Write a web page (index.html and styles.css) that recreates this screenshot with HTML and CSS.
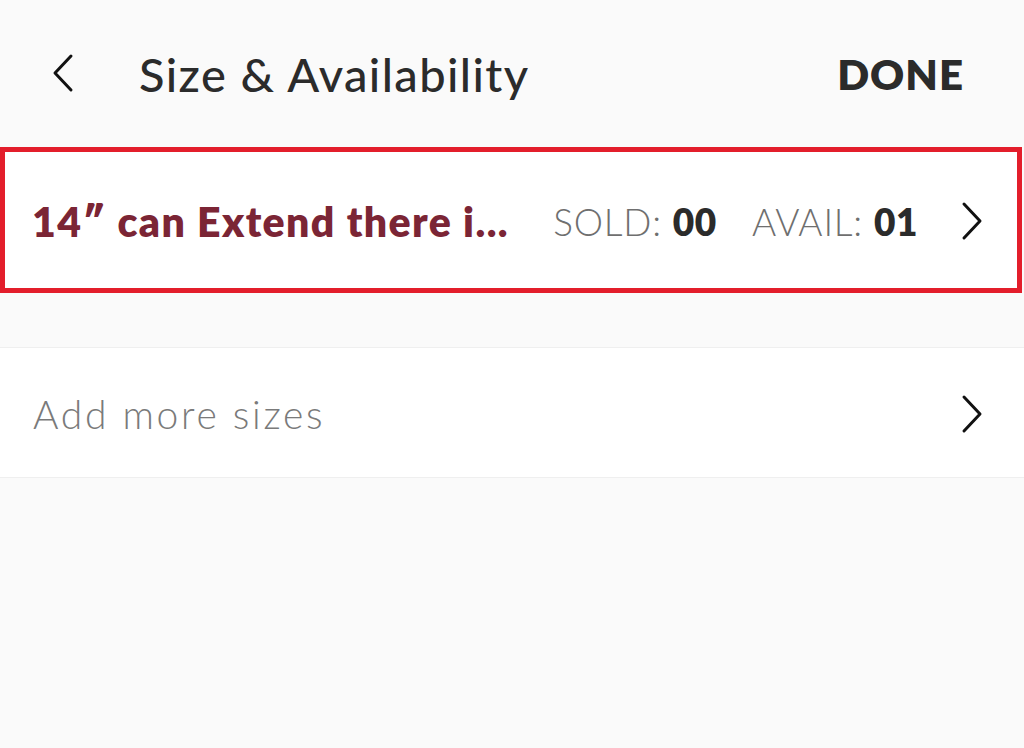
FILE: index.html
```html
<!DOCTYPE html>
<html lang="en">
<head>
    <meta charset="UTF-8">
    <meta name="viewport" content="width=device-width, initial-scale=1.0">
    <title>Size &amp; Availability</title>
    <link rel="stylesheet" href="styles.css">
</head>
<body>
    <header class="topbar">
        <button class="back" aria-label="Back">
            <svg width="24" height="40" viewBox="0 0 24 40"><path d="M20 3 L4 20 L20 37" fill="none" stroke="#111" stroke-width="3" stroke-linecap="round" stroke-linejoin="round"/></svg>
        </button>
        <h1 class="title">Size &amp; Availability</h1>
        <button class="done">DONE</button>
    </header>

    <div class="size-row selected">
        <span class="size-name">14&Prime; can Extend there i...</span>
        <span class="stat">SOLD: <b>00</b></span>
        <span class="stat">AVAIL: <b>01</b></span>
        <svg class="chevron" width="24" height="40" viewBox="0 0 24 40"><path d="M4 3 L20 20 L4 37" fill="none" stroke="#111" stroke-width="3" stroke-linecap="round" stroke-linejoin="round"/></svg>
    </div>

    <div class="add-row">
        <span class="add-label">Add more sizes</span>
        <svg class="chevron" width="24" height="40" viewBox="0 0 24 40"><path d="M4 3 L20 20 L4 37" fill="none" stroke="#111" stroke-width="3" stroke-linecap="round" stroke-linejoin="round"/></svg>
    </div>
</body>
</html>
```

FILE: styles.css
```css
body {
    margin: 0;
    background: #fafafa;
    font-family: Lato, "Liberation Sans", sans-serif;
    color: #2b2b2b;
}
button {
    background: none;
    border: none;
    padding: 0;
    font-family: inherit;
    cursor: pointer;
}
.topbar {
    display: flex;
    align-items: center;
    height: 147px;
    padding: 0 60px 0 51px;
    box-sizing: border-box;
}
.back {
    display: flex;
    margin-top: -2px;
}
.title {
    margin: 0 0 0 64px;
    font-size: 47px;
    font-weight: 500;
    letter-spacing: 1.4px;
    color: #2b2b2b;
    flex: 1;
}
.done {
    font-size: 42px;
    font-weight: 800;
    color: #2b2b2b;
    letter-spacing: 1px;
}
.size-row {
    display: flex;
    align-items: center;
    height: 146px;
    box-sizing: border-box;
    background: #fff;
    border: 5px solid #e31e2b;
    margin-right: 2px;
    padding: 2px 33px 0 27px;
}
.size-name {
    flex: 1;
    font-size: 41px;
    font-weight: 800;
    letter-spacing: 1.4px;
    color: #7b2535;
}
.stat {
    font-size: 37px;
    font-weight: 300;
    letter-spacing: 0.8px;
    color: #6f6f6f;
    margin-left: 35px;
}
.stat:first-of-type {
    margin-left: 0;
}
.stat b {
    color: #2b2b2b;
    font-weight: 800;
    letter-spacing: 0.6px;
}
.chevron {
    margin-left: 42px;
}
.add-row {
    display: flex;
    align-items: center;
    height: 131px;
    box-sizing: border-box;
    margin-top: 54px;
    background: #fff;
    border-top: 1px solid #efefef;
    border-bottom: 1px solid #efefef;
    padding: 2px 40px 0 33px;
}
.add-label {
    flex: 1;
    font-size: 39px;
    font-weight: 300;
    letter-spacing: 2.7px;
    color: #7a7a7a;
}
```
